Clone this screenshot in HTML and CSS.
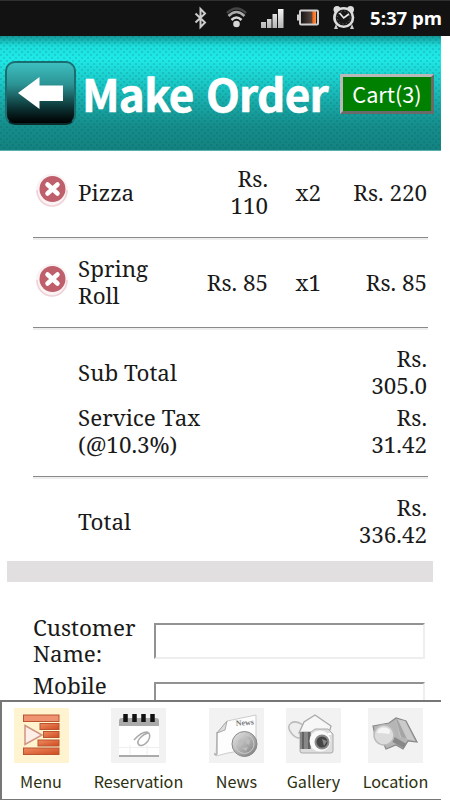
FILE: index.html
```
<!doctype html>
<html>
	<head>
		<meta charset="utf-8" />
		<meta name="viewport" content="width=device-width, initial-scale=1.0" />
		<title>Make Order</title>
		<link rel="stylesheet" href="styles.css">
	</head>
	<body>
		<div class="status_bar">
			<svg class="status_icons" width="166" height="35" viewBox="190 0 166 35">
				<defs>
					<linearGradient id="silver" x1="0" y1="0" x2="0" y2="1">
						<stop offset="0" stop-color="#f4f4f4"/>
						<stop offset="1" stop-color="#b4b4b4"/>
					</linearGradient>
					<linearGradient id="charge" x1="0" y1="0" x2="1" y2="0">
						<stop offset="0" stop-color="#111"/>
						<stop offset=".68" stop-color="#5a4a44"/>
						<stop offset=".7" stop-color="#f06010"/>
						<stop offset=".86" stop-color="#ff8a40"/>
						<stop offset=".9" stop-color="#222"/>
					</linearGradient>
				</defs>
				<path d="M195.500 12.500 L205 21.500 L200.500 26 V8 L205 12.500 L195.500 21.500" fill="none" stroke="#ccc" stroke-width="2"/>
				<path d="M227 12 Q236.500 3 246 12" fill="none" stroke="#444" stroke-width="2.500"/>
				<path d="M228.500 15 Q236.500 7 244.500 15" fill="none" stroke="#aaa" stroke-width="2.500"/>
				<path d="M231.500 19 Q236.500 14 241.500 19" fill="none" stroke="#d5d5d5" stroke-width="2.500"/>
				<circle cx="236.500" cy="23" r="3.300" fill="#d5d5d5"/>
				<path d="M261 21h5v6h-5z M267 18h4.500v9h-4.500z M272.500 13h4.500v14h-4.500z M278 8h5.500v19h-5.500z" fill="url(#silver)"/>
				<rect x="300" y="9.500" width="18" height="14" rx="1" fill="url(#charge)" stroke="#d0d0d0" stroke-width="2"/>
				<rect x="297" y="13.500" width="2.500" height="6" fill="#d0d0d0"/>
				<circle cx="337" cy="8.500" r="3.500" fill="#ddd"/>
				<circle cx="350.500" cy="8.500" r="3.500" fill="#ddd"/>
				<path d="M336 23l-2 5h4z M352 23l2 5h-4z" fill="#ccc"/>
				<circle cx="343.700" cy="16.500" r="9.300" fill="#181818" stroke="#ddd" stroke-width="2.600"/>
				<circle cx="343.700" cy="16.500" r="6.500" fill="none" stroke="#777" stroke-width="1" stroke-dasharray="1 2.400"/>
				<path d="M339.500 12 L343.700 17 L349 13" fill="none" stroke="#eee" stroke-width="1.600"/>
			</svg>
			<span class="clock">5:37 pm</span>
		</div>
		<div class="page">
			<header class="title_bar">
				<a class="back">
					<svg width="46" height="34" viewBox="0 0 46 34">
						<path d="M0 17 L21.500 1 V9.500 H45 V25 H21.500 V33 Z" fill="#fff"/>
					</svg>
				</a>
				<h1 class="title">Make Order</h1>
				<a class="cart"><span class="cart_text">Cart(3)</span></a>
			</header>
			<section class="order">
				<div class="item">
					<svg class="remove" width="34" height="36" viewBox="0 0 34 36">
						<ellipse cx="17" cy="18.500" rx="16" ry="16.500" fill="#fbf2f3"/>
						<path d="M2 18 A15 16 0 0 0 32 18" fill="none" stroke="#edd2d6" stroke-width="1.500"/>
						<circle cx="17.500" cy="17" r="13" fill="#bf5f6c"/>
						<path d="M12.500 12.500 L22.500 21.500 M22.500 12.500 L12.500 21.500" stroke="#fff" stroke-width="4.500" stroke-linecap="round"/>
					</svg>
					<span class="name">Pizza</span>
					<span class="price">Rs.<br/>110</span>
					<span class="count">x2</span>
					<span class="price">Rs. 220</span>
				</div>
				<hr/>
				<div class="item">
					<svg class="remove" width="34" height="36" viewBox="0 0 34 36">
						<ellipse cx="17" cy="18.500" rx="16" ry="16.500" fill="#fbf2f3"/>
						<path d="M2 18 A15 16 0 0 0 32 18" fill="none" stroke="#edd2d6" stroke-width="1.500"/>
						<circle cx="17.500" cy="17" r="13" fill="#bf5f6c"/>
						<path d="M12.500 12.500 L22.500 21.500 M22.500 12.500 L12.500 21.500" stroke="#fff" stroke-width="4.500" stroke-linecap="round"/>
					</svg>
					<span class="name">Spring<br/>Roll</span>
					<span class="price">Rs. 85</span>
					<span class="count">x1</span>
					<span class="price">Rs. 85</span>
				</div>
				<hr/>
				<div class="sum">
					<span class="name">Sub Total</span>
					<span class="price">Rs.<br/>305.0</span>
				</div>
				<div class="sum tax">
					<span class="name">Service Tax<br/>(@10.3%)</span>
					<span class="price">Rs.<br/>31.42</span>
				</div>
				<hr/>
				<div class="sum">
					<span class="name">Total</span>
					<span class="price">Rs.<br/>336.42</span>
				</div>
			</section>
			<div class="divider"></div>
			<form class="customer">
				<label class="field">
					<span>Customer<br/>Name:</span>
					<input type="text"/>
				</label>
				<label class="field mobile">
					<span>Mobile</span>
					<input type="text"/>
				</label>
			</form>
		</div>
		<nav class="tabs">
			<a class="tab">
				<svg class="active" width="55" height="55" viewBox="0 0 55 55">
					<defs>
						<linearGradient id="brick" x1="0" y1="0" x2="1" y2="1">
							<stop offset="0" stop-color="#ef8b62"/>
							<stop offset="1" stop-color="#cf4b1f"/>
						</linearGradient>
					</defs>
					<g fill="url(#brick)" stroke="#b9542f" stroke-width="1">
						<rect x="9.500" y="7" width="35.500" height="6.500" fill="#ef9272"/>
						<rect x="26" y="15.500" width="19" height="6"/>
						<rect x="29.500" y="23.500" width="15.500" height="6"/>
						<rect x="24" y="32" width="21" height="6"/>
						<rect x="9.500" y="40" width="35.500" height="6.500"/>
					</g>
					<path d="M11 17.500 L28 27 L11 36.500 Z" fill="#fdeee8" stroke="#cf9582" stroke-width="1.500"/>
				</svg>
				<span>Menu</span>
			</a>
			<a class="tab">
				<svg width="55" height="55" viewBox="0 0 55 55">
					<path d="M8 18 V13 Q8 10 11 10 H45 Q48 10 48 13 V18 Z" fill="#aaa"/>
					<rect x="8" y="18" width="40" height="31" fill="#fff"/>
					<path d="M8 39.500 H48 M19 37 V47 M36 37 V47" stroke="#eee" stroke-width="1"/>
					<path d="M8 48 H48" stroke="#aaa" stroke-width="2"/>
					<path d="M14.500 6v8 M23.500 6v8 M32.500 6v8 M41.500 6v8" stroke="#111" stroke-width="4.500"/>
					<path d="M23 32 Q30 24 36 24 Q41 26 37 33 Q32 39 28 37 Q25 34 30 29 Q33 26 37 25" fill="none" stroke="#aaa" stroke-width="1.500"/>
				</svg>
				<span>Reservation</span>
			</a>
			<a class="tab">
				<svg width="55" height="55" viewBox="0 0 55 55">
					<defs>
						<linearGradient id="steel" x1="0" y1="0" x2="1" y2="1">
							<stop offset="0" stop-color="#ededed"/>
							<stop offset="1" stop-color="#777"/>
						</linearGradient>
					</defs>
					<path d="M8 25 L18 13 L47 7 V40 L19 45 L7 48 Z" fill="#fdfdfd" stroke="#ccc" stroke-width="1"/>
					<path d="M8 25 L18 13 L16 22 Z" fill="#ddd" stroke="#aaa" stroke-width="1"/>
					<path d="M8 24 V46 Q5 48 6 45" fill="none" stroke="#aaa" stroke-width="1.300"/>
					<text class="paper_text" x="27" y="18" transform="rotate(-5 27 18)">News</text>
					<circle cx="35.500" cy="36" r="12.500" fill="url(#steel)" stroke="#888" stroke-width="1"/>
					<circle cx="35.500" cy="36" r="9.500" fill="none" stroke="#ccc" stroke-width="1"/>
					<path d="M29 33 L33 30 L34 35 L31 38 Z M36 30 L41 32 L40 37 L37 35 Z M33 40 L39 39 L37 43 Z" fill="#bdbdbd"/>
				</svg>
				<span>News</span>
			</a>
			<a class="tab">
				<svg width="55" height="55" viewBox="0 0 55 55">
					<path d="M17 28 Q12 33 6 26 Q0 19 5 15 Q10 12 17 17 L15 29" fill="#eee" stroke="#bbb" stroke-width="1.500"/>
					<path d="M13 25 L18 14 L29 7 L45 18 L42 28 Z" fill="#f7f7f7" stroke="#aaa" stroke-width="1.300"/>
					<path d="M16 24 H25 L29 21 H42 L47 26 V43 Q47 45 45 45 H16 Q14 45 14 43 V26 Q14 24 16 24 Z" fill="#ddd" stroke="#aaa" stroke-width="1"/>
					<rect x="14" y="24" width="11" height="17" fill="#888"/>
					<path d="M17 24 V41 M23 24 V41" stroke="#555" stroke-width="1.500"/>
					<circle cx="34" cy="33" r="10.500" fill="#fafafa"/>
					<circle cx="36" cy="34" r="7.500" fill="#8a8a8a"/>
					<circle cx="36" cy="34" r="5.500" fill="#444"/>
					<path d="M36 31 l5 2 -3 5z" fill="#888"/>
					<path d="M42 26h3" stroke="#fff" stroke-width="2"/>
				</svg>
				<span>Gallery</span>
			</a>
			<a class="tab">
				<svg width="55" height="55" viewBox="0 0 55 55">
					<path d="M5 18 L21 15 L28 10 L38 13 L49 34 L40 33 L35 41 L28 37 L18 41 L15 34 L8 32 Z" fill="#b5b5b5" stroke="#888" stroke-width="1.200"/>
					<path d="M28 11 L37 13 L47 33 L39 31 L32 29 Z" fill="#cacaca"/>
					<path d="M28 11 L33 29 L39 31 L30 12" fill="#a5a5a5"/>
					<path d="M23 30 L37 38" stroke="#888" stroke-width="5"/>
					<circle cx="16" cy="27" r="10" fill="#dcdcdc" stroke="#bbb" stroke-width="1.500"/>
					<path d="M9 25 Q11 18 19 20 Q24 22 21 26 Q15 25 9 25 Z" fill="#f5f5f5"/>
				</svg>
				<span>Location</span>
			</a>
		</nav>
	</body>
</html>
```
FILE: styles.css
```
* {
	box-sizing : border-box;
}
body {
	margin : 0;
	width : 450px;
	height : 800px;
	overflow : hidden;
	display : flex;
	flex-direction : column;
	background-color : #fff;
	color : #1a1a1a;
	font-family : "Noto Serif", "Liberation Serif", serif;
	font-size : 22.400px;
	line-height : 27px;
}
.status_bar {
	flex : none;
	height : 36px;
	padding-right : 8px;
	display : flex;
	justify-content : flex-end;
	gap : 14px;
	background-color : #121212;
	border-top : 1px solid #303030;
	font-family : "Open Sans", sans-serif;
}
.clock {
	width : 72px;
	color : #fff;
	font-size : 18.600px;
	font-weight : 700;
	line-height : 34px;
	white-space : nowrap;
}
.page {
	flex : none;
	height : 664px;
	overflow : hidden;
}
.title_bar {
	width : 441px;
	height : 115px;
	padding : 0 8px 0 5px;
	display : flex;
	align-items : center;
	background-image :
		radial-gradient(circle at 1px 1px, rgba(0, 70, 80, .15) 1px, transparent 1.500px),
		radial-gradient(circle at 4px 4px, rgba(0, 70, 80, .15) 1px, transparent 1.500px),
		linear-gradient(#149797 0, #1cdddb 10px, #1feae8 22px, #1bcfcd 42px, #17a8a6 68px, #158d8b 90px, #138280 100%);
	background-size : 6px 6px, 6px 6px, auto;
	border-bottom : 1px solid #5aaeac;
}
.back {
	flex : none;
	width : 71px;
	height : 64px;
	padding-left : 11px;
	display : flex;
	align-items : center;
	background-image : linear-gradient(#3dbfc0, #2c9495 35%, #0c3233 75%, #000);
	border : 2px solid #1b6e6f;
	border-bottom-color : #0a2a2a;
	border-radius : 10px;
}
.title {
	flex : none;
	width : 262px;
	margin : 0;
	padding-left : 6px;
	color : #fff;
	font-family : "Noto Sans CJK SC", sans-serif;
	font-size : 44px;
	font-weight : 700;
	line-height : 60px;
	letter-spacing : -.700px;
	word-spacing : 3px;
	-webkit-text-stroke : .600px #fff;
	white-space : nowrap;
}
.cart {
	flex : none;
	width : 94px;
	height : 40px;
	margin : 2px 0 0 2px;
	padding-bottom : 2px;
	display : flex;
	justify-content : center;
	align-items : center;
	background-color : #008000;
	border : 3px solid;
	border-color : #b9b9b9 #6a6a6a #6a6a6a #b9b9b9;
	color : #fff;
	font-family : "Noto Sans CJK SC", sans-serif;
	font-size : 21.700px;
}
.order {
	width : 395px;
	height : 410px;
	margin-left : 33px;
	padding-top : 14px;
}
.item {
	height : 54px;
	display : grid;
	grid-template-columns : 45px 98px 92px 53px 106px;
	align-items : center;
}
.remove {
	margin : -4px 0 0 2px;
}
.price {
	text-align : right;
}
.count {
	text-align : right;
}
hr {
	height : 3px;
	margin : 18px 0 15px;
	border : 0;
	border-top : 1px solid #8a8a8a;
	border-bottom : 2px solid #eee;
}
.sum {
	height : 54px;
	padding : 0 1px 0 45px;
	display : flex;
	justify-content : space-between;
	align-items : center;
}
.tax {
	margin-top : 5px;
}
.divider {
	width : 426px;
	height : 21px;
	margin-left : 7px;
	background-color : #e1dfe0;
}
.customer {
	margin : 32px 0 0 33px;
	display : flex;
	flex-direction : column;
	gap : 5px;
}
.field {
	height : 54px;
	display : grid;
	grid-template-columns : 121px 271px;
	align-items : center;
	line-height : 26px;
}
.mobile {
	align-items : start;
}
.mobile input {
	margin-top : 9px;
}
.field input {
	width : 271px;
	height : 36px;
	border : 2px solid;
	border-color : #929292 #eee #eee #929292;
	background-color : #fff;
}
.tabs {
	flex : none;
	width : 441px;
	height : 100px;
	padding : 6px 8px 0 0;
	display : grid;
	grid-template-columns : 78px 117px 79px 75px 89px;
	background-color : #fff;
	border : solid #777;
	border-width : 2px 0 1px 2px;
	font-family : "Noto Sans CJK SC", sans-serif;
	font-size : 16.200px;
	color : #2d3010;
}
.tab {
	display : flex;
	flex-direction : column;
	align-items : center;
	gap : 5px;
}
.tab svg {
	background-color : #f2f2f2;
}
.tab .active {
	background-color : #fff3d0;
}
.paper_text {
	font-family : "Liberation Serif", serif;
	font-size : 8px;
	font-weight : 700;
	fill : #777;
}
```
